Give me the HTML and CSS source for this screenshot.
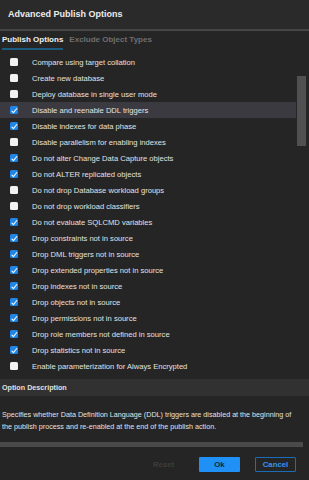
FILE: index.html
```html
<!DOCTYPE html>
<html lang="en">
<head>
    <meta charset="UTF-8">
    <title>Advanced Publish Options</title>
    <link rel="stylesheet" href="styles.css">
</head>
<body>

<div class="dialog">
    <div class="header">Advanced Publish Options</div>

    <div class="tabs">
        <div class="tab active">Publish Options</div>
        <div class="tab">Exclude Object Types</div>
    </div>

    <div class="options">
        <div class="row"><span class="box"></span>Compare using target collation</div>
        <div class="row"><span class="box"></span>Create new database</div>
        <div class="row"><span class="box"></span>Deploy database in single user mode</div>
        <div class="row selected"><span class="box checked"></span>Disable and reenable DDL triggers</div>
        <div class="row"><span class="box checked"></span>Disable indexes for data phase</div>
        <div class="row"><span class="box"></span>Disable parallelism for enabling indexes</div>
        <div class="row"><span class="box checked"></span>Do not alter Change Data Capture objects</div>
        <div class="row"><span class="box checked"></span>Do not ALTER replicated objects</div>
        <div class="row"><span class="box"></span>Do not drop Database workload groups</div>
        <div class="row"><span class="box"></span>Do not drop workload classifiers</div>
        <div class="row"><span class="box checked"></span>Do not evaluate SQLCMD variables</div>
        <div class="row"><span class="box checked"></span>Drop constraints not in source</div>
        <div class="row"><span class="box checked"></span>Drop DML triggers not in source</div>
        <div class="row"><span class="box checked"></span>Drop extended properties not in source</div>
        <div class="row"><span class="box checked"></span>Drop indexes not in source</div>
        <div class="row"><span class="box checked"></span>Drop objects not in source</div>
        <div class="row"><span class="box checked"></span>Drop permissions not in source</div>
        <div class="row"><span class="box checked"></span>Drop role members not defined in source</div>
        <div class="row"><span class="box checked"></span>Drop statistics not in source</div>
        <div class="row"><span class="box"></span>Enable parameterization for Always Encrypted</div>
        <div class="scrollbar"></div>
    </div>

    <div class="desc-title">Option Description</div>
    <div class="desc-text">Specifies whether Data Definition Language (DDL) triggers are disabled at the beginning of the publish process and re-enabled at the end of the publish action.</div>
    <div class="desc-bar"></div>

    <div class="buttons">
        <button class="btn reset">Reset</button>
        <button class="btn ok">Ok</button>
        <button class="btn cancel">Cancel</button>
    </div>
</div>

</body>
</html>
```

FILE: styles.css
```css
* {
    margin: 0;
    padding: 0;
    box-sizing: border-box;
    font-family: 'Liberation Sans', Arial, sans-serif;
}

body {
    background-color: #252525;
    width: 309px;
    height: 480px;
    overflow: hidden;
}

.dialog {
    width: 309px;
    height: 480px;
    display: flex;
    flex-direction: column;
    color: #e6e6e6;
}

.header {
    height: 31px;
    background-color: #2a2a2a;
    border-bottom: 2px solid #464646;
    padding-left: 8px;
    font-size: 9px;
    font-weight: bold;
    line-height: 29px;
    color: #ececec;
}

.tabs {
    display: flex;
    gap: 6px;
    padding: 0 2px;
    height: 19px;
}

.tab {
    font-size: 8px;
    font-weight: bold;
    color: #6f6f6f;
    line-height: 17px;
}

.tab.active {
    color: #f0f0f0;
    border-bottom: 2px solid #1d5a80;
}

.options {
    position: relative;
    margin-top: 4px;
    height: 324px;
}

.row {
    display: flex;
    align-items: center;
    height: 16px;
    font-size: 7.6px;
    color: #e2e2e2;
    padding-left: 10px;
    width: 296px;
}

.row.selected {
    background-color: #3b3a41;
}

.box {
    width: 8px;
    height: 8px;
    border-radius: 1.5px;
    background-color: #f2f2f2;
    margin-right: 14px;
    flex-shrink: 0;
    position: relative;
}

.box.checked {
    background-color: #1f86e8;
}

.box.checked::after {
    content: "";
    position: absolute;
    left: 2.6px;
    top: 0.8px;
    width: 2px;
    height: 4.5px;
    border: solid #fff;
    border-width: 0 1.3px 1.3px 0;
    transform: rotate(40deg);
}

.scrollbar {
    position: absolute;
    right: 3px;
    top: 22px;
    width: 9px;
    height: 70px;
    background-color: #505050;
}

.desc-title {
    margin-top: 1px;
    height: 17px;
    background-color: #313131;
    font-size: 7.2px;
    font-weight: bold;
    line-height: 17px;
    padding-left: 2px;
    color: #e0e0e0;
}

.desc-text {
    padding: 13px 8px 0 2px;
    font-size: 7.2px;
    line-height: 12px;
    color: #e2e2e2;
    height: 46px;
}

.desc-bar {
    width: 303px;
    height: 5px;
    background-color: #4a4a4a;
}

.buttons {
    display: flex;
    justify-content: flex-end;
    gap: 15px;
    padding: 10px 13px 0 0;
}

.btn {
    width: 41px;
    height: 15px;
    font-size: 7.8px;
    font-weight: bold;
    border: 1px solid transparent;
    border-radius: 1px;
    background: transparent;
}

.btn.reset {
    color: #3d3d3d;
}

.btn.ok {
    background-color: #1f90f5;
    color: #14263a;
}

.btn.cancel {
    border-color: #1b6cb8;
    color: #3593ee;
}
```
